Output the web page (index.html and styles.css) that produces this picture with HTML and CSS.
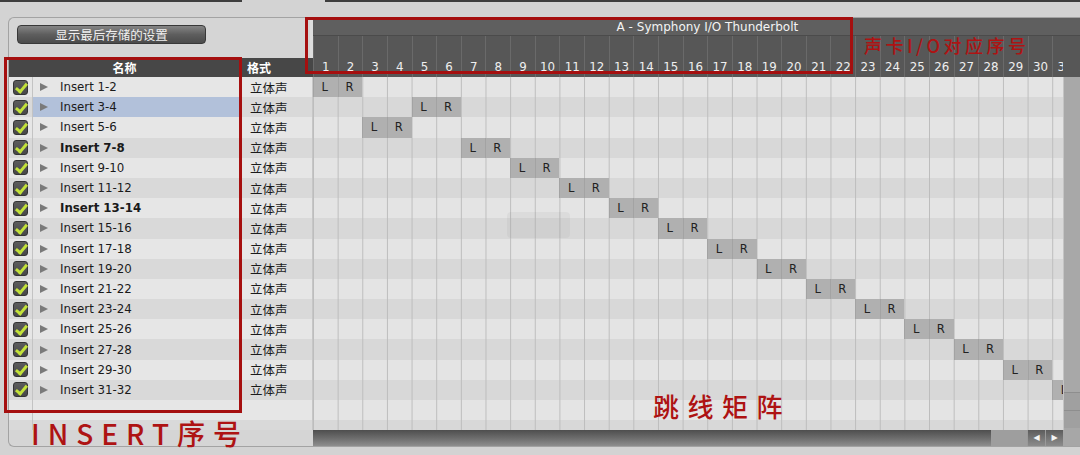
FILE: index.html
```html
<!DOCTYPE html>
<html lang="zh-CN">
<head>
	<meta charset="UTF-8">
	<title>I/O 设置 - Insert</title>
	<link rel="stylesheet" href="styles.css">
</head>
<body>
	<div class="topbar"><span class="tab tab-left"></span><span class="tab tab-right"></span></div>

	<div class="panel">
		<aside class="side">
			<div class="toolbar">
				<button class="btn">显示最后存储的设置</button>
			</div>
			<div class="thead">
				<span class="th-name">名称</span>
				<span class="th-fmt">格式</span>
			</div>
			<div class="tbody">
				<div class="row"><span class="c-check"><i class="chk"></i></span><span class="c-name"><i class="tri"></i>Insert 1-2</span><span class="c-fmt">立体声</span></div>
				<div class="row"><span class="c-check"><i class="chk"></i></span><span class="c-name selected"><i class="tri"></i>Insert 3-4</span><span class="c-fmt">立体声</span></div>
				<div class="row"><span class="c-check"><i class="chk"></i></span><span class="c-name"><i class="tri"></i>Insert 5-6</span><span class="c-fmt">立体声</span></div>
				<div class="row"><span class="c-check"><i class="chk"></i></span><span class="c-name bold"><i class="tri"></i>Insert 7-8</span><span class="c-fmt">立体声</span></div>
				<div class="row"><span class="c-check"><i class="chk"></i></span><span class="c-name"><i class="tri"></i>Insert 9-10</span><span class="c-fmt">立体声</span></div>
				<div class="row"><span class="c-check"><i class="chk"></i></span><span class="c-name"><i class="tri"></i>Insert 11-12</span><span class="c-fmt">立体声</span></div>
				<div class="row"><span class="c-check"><i class="chk"></i></span><span class="c-name bold"><i class="tri"></i>Insert 13-14</span><span class="c-fmt">立体声</span></div>
				<div class="row"><span class="c-check"><i class="chk"></i></span><span class="c-name"><i class="tri"></i>Insert 15-16</span><span class="c-fmt">立体声</span></div>
				<div class="row"><span class="c-check"><i class="chk"></i></span><span class="c-name"><i class="tri"></i>Insert 17-18</span><span class="c-fmt">立体声</span></div>
				<div class="row"><span class="c-check"><i class="chk"></i></span><span class="c-name"><i class="tri"></i>Insert 19-20</span><span class="c-fmt">立体声</span></div>
				<div class="row"><span class="c-check"><i class="chk"></i></span><span class="c-name"><i class="tri"></i>Insert 21-22</span><span class="c-fmt">立体声</span></div>
				<div class="row"><span class="c-check"><i class="chk"></i></span><span class="c-name"><i class="tri"></i>Insert 23-24</span><span class="c-fmt">立体声</span></div>
				<div class="row"><span class="c-check"><i class="chk"></i></span><span class="c-name"><i class="tri"></i>Insert 25-26</span><span class="c-fmt">立体声</span></div>
				<div class="row"><span class="c-check"><i class="chk"></i></span><span class="c-name"><i class="tri"></i>Insert 27-28</span><span class="c-fmt">立体声</span></div>
				<div class="row"><span class="c-check"><i class="chk"></i></span><span class="c-name"><i class="tri"></i>Insert 29-30</span><span class="c-fmt">立体声</span></div>
				<div class="row"><span class="c-check"><i class="chk"></i></span><span class="c-name"><i class="tri"></i>Insert 31-32</span><span class="c-fmt">立体声</span></div>
				<div class="row"><span class="c-check"></span><span class="c-name"></span><span class="c-fmt"></span></div>
				<div class="row"><span class="c-check"></span><span class="c-name"></span><span class="c-fmt"></span></div>
			</div>
		</aside>

		<main class="matrix">
			<div class="mhead">
				<div class="device">A - Symphony I/O Thunderbolt</div>
				<div class="chans">
					<span>1</span><span>2</span><span>3</span><span>4</span><span>5</span><span>6</span><span>7</span><span>8</span>
					<span>9</span><span>10</span><span>11</span><span>12</span><span>13</span><span>14</span><span>15</span><span>16</span>
					<span>17</span><span>18</span><span>19</span><span>20</span><span>21</span><span>22</span><span>23</span><span>24</span>
					<span>25</span><span>26</span><span>27</span><span>28</span><span>29</span><span>30</span><span>31</span><span>32</span>
				</div>
			</div>

			<div class="mbody">
				<div class="grid">
					<div class="mrow"><span class="pin" style="grid-column:1">L</span><span class="pin">R</span></div>
					<div class="mrow"><span class="pin" style="grid-column:5">L</span><span class="pin">R</span></div>
					<div class="mrow"><span class="pin" style="grid-column:3">L</span><span class="pin">R</span></div>
					<div class="mrow"><span class="pin" style="grid-column:7">L</span><span class="pin">R</span></div>
					<div class="mrow"><span class="pin" style="grid-column:9">L</span><span class="pin">R</span></div>
					<div class="mrow"><span class="pin" style="grid-column:11">L</span><span class="pin">R</span></div>
					<div class="mrow"><span class="pin" style="grid-column:13">L</span><span class="pin">R</span></div>
					<div class="mrow"><span class="pin" style="grid-column:15">L</span><span class="pin">R</span></div>
					<div class="mrow"><span class="pin" style="grid-column:17">L</span><span class="pin">R</span></div>
					<div class="mrow"><span class="pin" style="grid-column:19">L</span><span class="pin">R</span></div>
					<div class="mrow"><span class="pin" style="grid-column:21">L</span><span class="pin">R</span></div>
					<div class="mrow"><span class="pin" style="grid-column:23">L</span><span class="pin">R</span></div>
					<div class="mrow"><span class="pin" style="grid-column:25">L</span><span class="pin">R</span></div>
					<div class="mrow"><span class="pin" style="grid-column:27">L</span><span class="pin">R</span></div>
					<div class="mrow"><span class="pin" style="grid-column:29">L</span><span class="pin">R</span></div>
					<div class="mrow"><span class="pin" style="grid-column:31">L</span><span class="pin">R</span></div>
					<div class="mrow"></div>
					<div class="mrow"></div>
				</div>
				<div class="vscroll">
					<span class="vbtn"></span>
					<span class="vbtn"></span>
				</div>
			</div>

			<div class="hscroll">
				<span class="hthumb"></span>
				<span class="htrack"></span>
				<span class="hbtn">&#9664;</span>
				<span class="hbtn">&#9654;</span>
				<span class="hcorner"></span>
			</div>
		</main>
	</div>

	<!-- ghost of a drag label left in the grid -->
	<div class="ghost"></div>

	<!-- red annotations drawn over the screenshot -->
	<div class="mark mark-insert"></div>
	<div class="mark mark-io"></div>
	<p class="note note-io">声卡I/O对应序号</p>
	<p class="note note-insert">INSERT序号</p>
	<p class="note note-matrix">跳线矩阵</p>
</body>
</html>
```

FILE: styles.css
```css
* {
	box-sizing: border-box;
}

:root {
	--cw: 24.65px;
	--row: 20.2px;
}

body {
	margin: 0;
	width: 1080px;
	height: 455px;
	overflow: hidden;
	position: relative;
	background: #d3d3d3;
	font-family: "DejaVu Sans", "Noto Sans CJK SC", sans-serif;
	color: #1a1a1a;
}

.topbar {
	display: flex;
	height: 2px;
}
.tab {
	background: #3e3e3e;
}
.tab-left {
	width: 242px;
}
.tab-right {
	margin-left: 83px;
	flex: 1;
}

.panel {
	margin: 15px 0 0 8px;
	height: 430px;
	border: 1px solid #a3a3a3;
	border-right: none;
	border-radius: 6px 0 0 6px;
	background: #d5d5d5;
	display: grid;
	grid-template-columns: 304px 1fr;
	overflow: hidden;
}

/* left list */
.side {
	display: flex;
	flex-direction: column;
}
.toolbar {
	height: 40px;
	padding: 7px 0 0 8px;
	border-right: 3px solid #dedede;
}
.btn {
	width: 189px;
	height: 19px;
	padding: 0;
	border: 1px solid #383838;
	border-radius: 4px;
	background: linear-gradient(#858585, #5e5e5e 50%, #4b4b4b);
	color: #f0f0f0;
	font: 12.5px "Noto Sans CJK SC", sans-serif;
	line-height: 17px;
}
.thead {
	height: 19px;
	display: flex;
	background: #474747;
	color: #fff;
	font: bold 12px "Noto Sans CJK SC", sans-serif;
	line-height: 19px;
}
.th-name {
	width: 231px;
	text-align: center;
}
.th-fmt {
	padding-left: 7px;
}
.tbody {
	height: 353px;
	overflow: hidden;
}
.row {
	height: var(--row);
	display: flex;
	background: #e6e6e6;
	font-size: 11.8px;
}
.row:nth-child(even) {
	background: #d9d9d9;
}
.c-check {
	width: 24px;
	border-right: 1px solid #c3c3c3;
	display: flex;
	align-items: center;
	justify-content: center;
}
.c-name {
	width: 207px;
	display: flex;
	align-items: center;
	padding-left: 7px;
}
.c-name.selected {
	background: #b2c1da;
}
.c-name.bold {
	font-weight: bold;
}
.c-fmt {
	flex: 1;
	display: flex;
	align-items: center;
	padding-left: 10px;
	font: 12.5px "Noto Sans CJK SC", sans-serif;
	border-right: 1px solid #c6c6c6;
}
.chk {
	position: relative;
	width: 15px;
	height: 15px;
	border: 1px solid #343434;
	border-radius: 3px;
	background: linear-gradient(#5c5c5c, #474747);
}
.chk::after {
	content: "";
	position: absolute;
	left: 4px;
	top: 0;
	width: 4px;
	height: 9px;
	border: solid #c3e23a;
	border-width: 0 3px 3px 0;
	transform: rotate(40deg);
}
.tri {
	width: 0;
	height: 0;
	margin-right: 12px;
	border-left: 8px solid #7a7a7a;
	border-top: 4.5px solid transparent;
	border-bottom: 4.5px solid transparent;
}

/* routing matrix */
.matrix {
	min-width: 0;
	display: grid;
	grid-template-rows: 59px 353px 16px;
	overflow: hidden;
}
.mhead {
	background: #575757;
	overflow: hidden;
}
.device {
	width: calc(var(--cw) * 32);
	height: 18px;
	line-height: 19px;
	text-align: center;
	background: #5f5f5f;
	border-bottom: 1px solid #4b4b4b;
	color: #f4f4f4;
	font-size: 12px;
}
.chans {
	width: 750px;
	height: 41px;
	display: grid;
	grid-template-columns: repeat(32, var(--cw));
	overflow: hidden;
}
.chans span {
	display: flex;
	align-items: flex-end;
	justify-content: center;
	padding-bottom: 3px;
	border-left: 1px solid #6a6a6a;
	color: #efefef;
	font-size: 11.8px;
}
.mbody {
	display: grid;
	grid-template-columns: 1fr 17px;
	min-height: 0;
}
.grid {
	overflow: hidden;
}
.mrow {
	height: var(--row);
	display: grid;
	grid-template-columns: repeat(32, var(--cw));
	background: linear-gradient(to right, #bdbdbd 1px, transparent 1px) 0 0 / var(--cw) 100% repeat-x, #e4e4e4;
}
.mrow:nth-child(even) {
	background-color: #d8d8d8;
}
.pin {
	background: #b0b0b0;
	border-left: 1px solid #a3a3a3;
	padding-right: 2px;
	text-align: center;
	line-height: var(--row);
	font-size: 11.6px;
	color: #222;
}
.vscroll {
	display: flex;
	flex-direction: column;
	justify-content: flex-end;
	padding-bottom: 2px;
	background: #a8a8a8;
	border-left: 1px solid #c4c4c4;
}
.vbtn {
	height: 18px;
	border-top: 1px solid #8e8e8e;
	background: #a0a0a0;
}

.hscroll {
	display: flex;
}
.hthumb {
	flex: 1;
	background: linear-gradient(#4e4e4e, #6c6c6c 50%, #8e8e8e);
}
.htrack {
	width: 36px;
	background: #9e9e9e;
}
.hbtn {
	width: 18px;
	border-left: 1px solid #9a9a9a;
	background: linear-gradient(#5c5c5c, #7a7a7a 60%, #8c8c8c);
	color: #f4f4f4;
	font-size: 8px;
	line-height: 16px;
	text-align: center;
}
.hcorner {
	width: 17px;
	background: #a7a7a7;
}

.ghost {
	position: absolute;
	left: 507px;
	top: 212px;
	width: 63px;
	height: 26px;
	border-radius: 4px;
	background: rgba(0, 0, 0, 0.035);
}

/* annotations */
.mark {
	position: absolute;
	border: 3px solid #a50f0f;
}
.mark-insert {
	left: 4px;
	top: 57px;
	width: 238px;
	height: 356px;
}
.mark-io {
	left: 305px;
	top: 17px;
	width: 548px;
	height: 57px;
}
.note {
	position: absolute;
	margin: 0;
	color: #ae1313;
	font-family: "Noto Sans CJK SC", sans-serif;
	font-weight: 500;
	line-height: 1;
	white-space: nowrap;
}
.note-io {
	left: 864px;
	top: 36px;
	font-size: 18px;
	letter-spacing: 3.5px;
}
.note-insert {
	left: 31px;
	top: 419px;
	font-size: 28px;
	letter-spacing: 8px;
}
.note-matrix {
	left: 653px;
	top: 393px;
	font-size: 26px;
	letter-spacing: 8.5px;
}
```
